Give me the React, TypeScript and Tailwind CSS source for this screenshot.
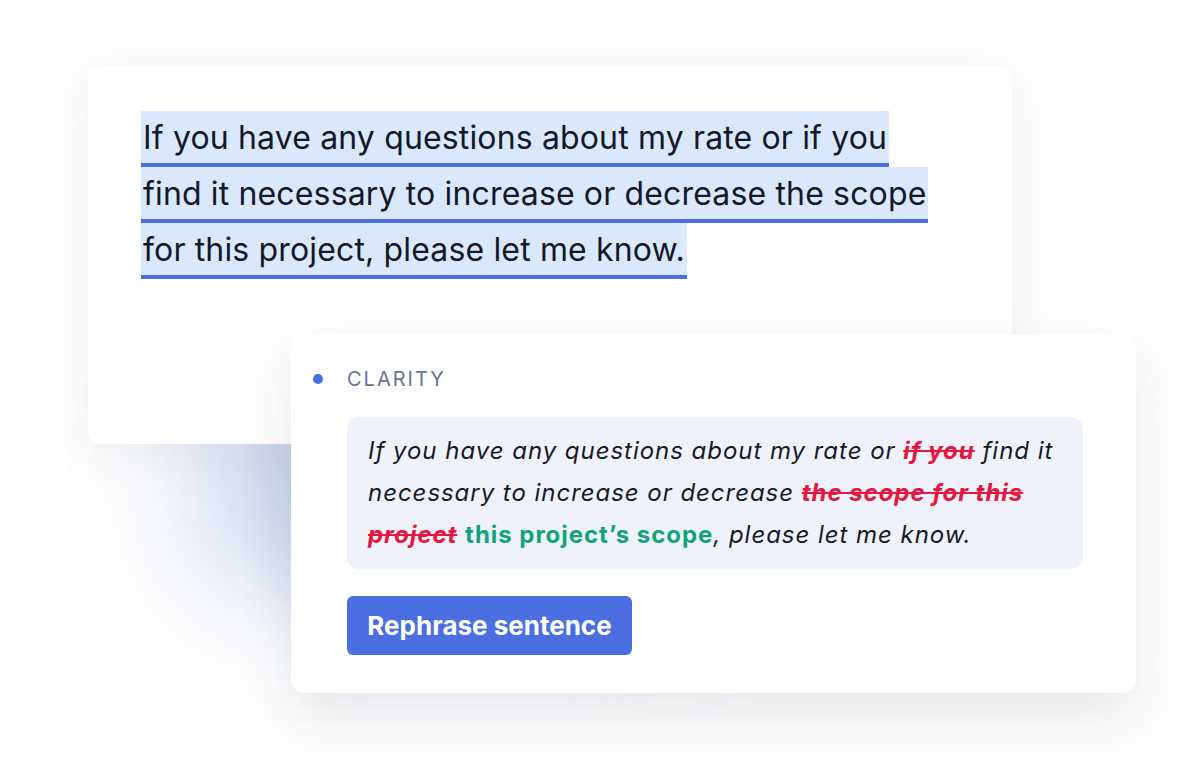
export default function App() {
  const lines = [
    "If you have any questions about my rate or if you",
    "find it necessary to increase or decrease the scope",
    "for this project, please let me know.",
  ];

  return (
    <div className="relative w-[1188px] h-[759px] bg-white overflow-hidden" style={{ fontFamily: "Inter, 'Noto Sans', sans-serif" }}>
      {/* blue glow under the first card */}
      <div className="absolute left-[200px] top-[380px] w-[530px] h-[210px] rounded-[80px] bg-[rgba(110,145,210,0.4)] blur-[60px]" />

      {/* original text card */}
      <div className="relative ml-[88px] pt-[66px]">
        <div className="w-[924px] h-[378px] bg-white rounded-[12px] pt-[45px] pl-[53px] shadow-[0_10px_50px_rgba(20,30,60,0.07)]">
          {lines.map((l) => (
            <div key={l} className="h-[56px]">
              <span className="inline-block bg-[#d9e8fd] border-b-4 border-[#4a6ee0] px-[2px] pt-px leading-[51px] text-[32px] tracking-[0.15px] text-[#141827] whitespace-nowrap">
                {l}
              </span>
            </div>
          ))}
        </div>
      </div>

      {/* suggestion card */}
      <div className="relative ml-[291px] -mt-[110px] w-[845px] h-[359px] bg-white rounded-[14px] pt-[32px] pl-[22px] shadow-[0_25px_55px_rgba(20,30,60,0.1)]">
        <div className="flex items-center h-[26px]">
          <span className="w-[10px] h-[10px] rounded-full bg-[#4a6ee0]" />
          <span className="ml-[24px] text-[20px] tracking-[0.1em] text-[#6b7390]">CLARITY</span>
        </div>
        <div className="ml-[34px] mt-[25px] w-[736px] h-[152px] bg-[#eff2fb] rounded-[12px] pt-[13px] pl-[21px] text-[24px] leading-[42px] tracking-[0.04em] italic text-[#161a28] whitespace-nowrap">
          If you have any questions about my rate or{" "}
          <span className="font-bold text-[#e5173f] line-through">if you</span> find it
          <br />
          necessary to increase or decrease{" "}
          <span className="font-bold text-[#e5173f] line-through">the scope for this</span>
          <br />
          <span className="font-bold text-[#e5173f] line-through">project</span>{" "}
          <span className="font-bold not-italic text-[#13a27b]">this project’s scope</span>, please let me know.
        </div>
        <button className="ml-[34px] mt-[27px] w-[285px] h-[59px] bg-[#4b6fe0] rounded-[6px] text-white text-[26px] font-bold">
          Rephrase sentence
        </button>
      </div>
    </div>
  );
}
